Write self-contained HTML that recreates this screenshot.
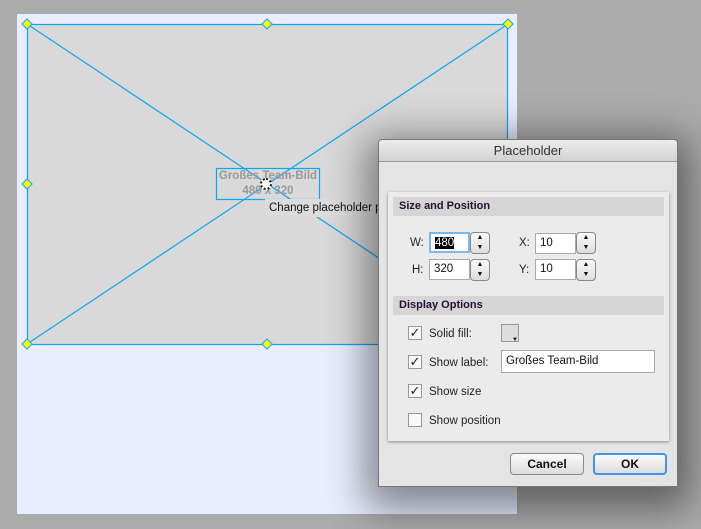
<!DOCTYPE html>
<html><head><meta charset="utf-8"><style>
*{margin:0;padding:0;box-sizing:border-box}
body{width:701px;height:529px;background:#acacac;position:relative;overflow:hidden;font-family:"Liberation Sans",sans-serif;font-size:12px;color:#111}
.abs{position:absolute}
.page{left:17px;top:14px;width:500px;height:500px;background:#e8edff}
.dlg{left:378px;top:139px;width:300px;height:348px;background:#e4e4e4;border:1px solid #777;border-radius:4px 4px 0 0;box-shadow:0 10px 40px 12px rgba(0,0,0,.45)}
.title{left:0;top:0;width:298px;height:22px;background:linear-gradient(#ececec,#d2d2d2);border-bottom:1px solid #999;text-align:center;line-height:22px;font-size:13px;color:#333;border-radius:4px 4px 0 0}
.panel{left:9px;top:52px;width:281px;height:249px;background:#ebebeb;box-shadow:0 1px 3px rgba(0,0,0,.4)}
.hdr{left:5px;width:271px;height:19px;background:#d5d5d5;font-weight:bold;color:#213;line-height:19px;padding-left:6px;font-size:11px}
.lbl{font-size:11.5px;color:#222;white-space:nowrap}
.inp{background:#fff;border:1px solid #aaa;height:21px;line-height:19px;padding-left:4px;font-size:11.5px;white-space:nowrap}
.step{width:20px;height:22px;border:1px solid #888;border-radius:4px;background:linear-gradient(#fafafa,#ddd);font-size:7px;text-align:center;line-height:10px;color:#111}
.cb{width:14px;height:14px;border:1px solid #999;background:#f8f8f8;font-size:13px;line-height:12px;text-align:center;color:#222}
.btn{height:22px;border:1px solid #888;border-radius:4px;background:linear-gradient(#fbfbfb,#ddd);font-weight:bold;text-align:center;line-height:20px;font-size:12px}
</style></head><body>
<div class="abs page"></div>
<div class="abs" style="left:27px;top:24px;width:481px;height:320px;background:#d9d9d9"></div>
<svg class="abs" style="left:0;top:0" width="701" height="529">
<g stroke="#0aa6f5" stroke-width="1.2" fill="none">
<rect x="27.5" y="24.5" width="480" height="320"/>
<line x1="27" y1="24" x2="508" y2="344"/>
<line x1="508" y1="24" x2="27" y2="344"/>
<rect x="216.5" y="168.5" width="103" height="31"/>
</g>
<g fill="#ffff00" stroke="#0aa6f5" stroke-width="1">
<polygon points="27,19 32,24 27,29 22,24"/><polygon points="267,19 272,24 267,29 262,24"/><polygon points="508,19 513,24 508,29 503,24"/>
<polygon points="27,179 32,184 27,189 22,184"/><polygon points="27,339 32,344 27,349 22,344"/><polygon points="267,339 272,344 267,349 262,344"/>
</g>
</svg>
<div class="abs" style="left:216px;top:169px;width:104px;text-align:center;color:#999;font-weight:bold;font-size:11.5px;line-height:15px;white-space:nowrap">Großes Team-Bild<br>480 x 320</div>
<div class="abs" style="left:260px;top:178px;width:12px;height:12px;border-radius:6px;border:2px dotted #111;background:#fff"></div>
<div class="abs" style="left:265px;top:199px;width:130px;height:18px;background:#dcdcdc;font-size:11.5px;line-height:18px;padding-left:4px;white-space:nowrap;overflow:hidden">Change placeholder properties</div>
<div class="abs dlg">
<div class="abs title">Placeholder</div>
<div class="abs panel">
<div class="abs hdr" style="top:5px">Size and Position</div>
<div class="abs lbl" style="left:22px;top:45px">W:</div>
<div class="abs inp" style="left:41px;top:40px;width:41px;border:2px solid #7db7f0"><span style="background:#000;color:#fff">480</span></div>
<div class="abs step" style="left:82px;top:40px">▲<br>▼</div>
<div class="abs lbl" style="left:24px;top:72px">H:</div>
<div class="abs inp" style="left:41px;top:67px;width:41px">320</div>
<div class="abs step" style="left:82px;top:67px">▲<br>▼</div>
<div class="abs lbl" style="left:131px;top:45px">X:</div>
<div class="abs inp" style="left:147px;top:41px;width:41px">10</div>
<div class="abs step" style="left:188px;top:40px">▲<br>▼</div>
<div class="abs lbl" style="left:131px;top:72px">Y:</div>
<div class="abs inp" style="left:147px;top:67px;width:41px">10</div>
<div class="abs step" style="left:188px;top:67px">▲<br>▼</div>
<div class="abs hdr" style="top:104px">Display Options</div>
<div class="abs cb" style="left:20px;top:134px">✓</div><div class="abs lbl" style="left:41px;top:136px">Solid fill:</div>
<div class="abs" style="left:113px;top:132px;width:18px;height:18px;border:1px solid #999;background:#ddd"><div class="abs" style="right:0;bottom:-2px;font-size:6px;line-height:6px">▼</div></div>
<div class="abs cb" style="left:20px;top:163px">✓</div><div class="abs lbl" style="left:41px;top:165px">Show label:</div>
<div class="abs inp" style="left:113px;top:158px;width:154px;height:23px;line-height:21px">Großes Team-Bild</div>
<div class="abs cb" style="left:20px;top:192px">✓</div><div class="abs lbl" style="left:41px;top:194px">Show size</div>
<div class="abs cb" style="left:20px;top:221px"></div><div class="abs lbl" style="left:41px;top:223px">Show position</div>
</div>
<div class="abs btn" style="left:131px;top:313px;width:74px">Cancel</div>
<div class="abs btn" style="left:214px;top:313px;width:74px;border:2px solid #3a9ae8;line-height:18px">OK</div>
</div>
</body></html>
